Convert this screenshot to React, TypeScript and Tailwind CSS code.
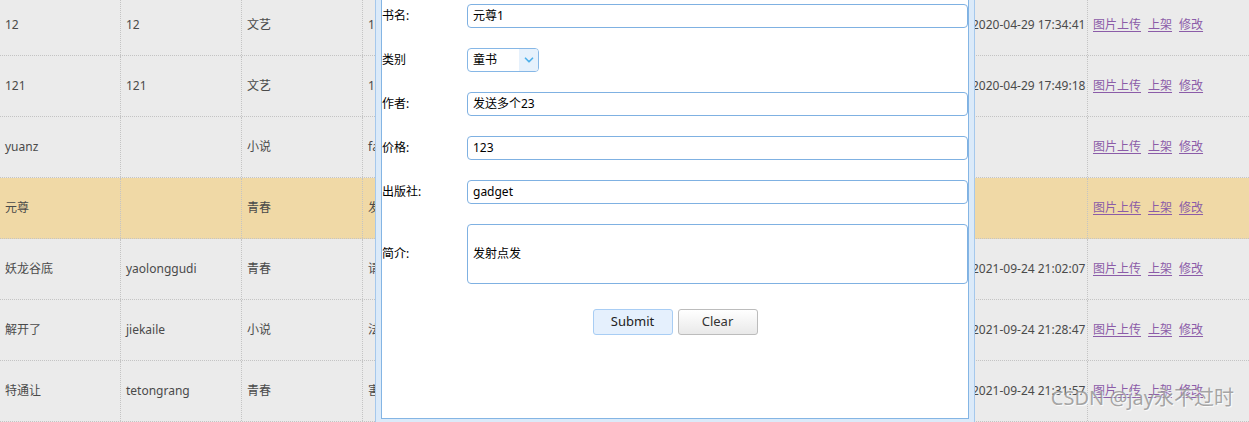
import { ChevronDown } from "lucide-react";

const rows = [
  { name: "12", py: "12", cat: "文艺", c4: "1", date: "2020-04-29 17:34:41" },
  { name: "121", py: "121", cat: "文艺", c4: "1", date: "2020-04-29 17:49:18" },
  { name: "yuanz", py: "", cat: "小说", c4: "fa", date: "" },
  { name: "元尊", py: "", cat: "青春", c4: "发", date: "", hl: true },
  { name: "妖龙谷底", py: "yaolonggudi", cat: "青春", c4: "请", date: "2021-09-24 21:02:07" },
  { name: "解开了", py: "jiekaile", cat: "小说", c4: "法", date: "2021-09-24 21:28:47" },
  { name: "特通让", py: "tetongrang", cat: "青春", c4: "害", date: "2021-09-24 21:31:57" },
];

const font = "font-['Noto_Sans','Noto_Sans_CJK_SC',sans-serif]";

function Cell({ children, w = "w-[121px]" }: { children?: React.ReactNode; w?: string }) {
  return (
    <div className={`${w} shrink-0 h-full flex items-center pl-[5px] border-r border-dotted border-[#c4c4c4] overflow-hidden whitespace-nowrap`}>
      {children}
    </div>
  );
}

function Field({ label, children, h = "h-[44px]" }: { label: string; children: React.ReactNode; h?: string }) {
  return (
    <div className={`flex items-center ${h}`}>
      <div className="w-[85px] shrink-0 text-[12px] text-black">{label}</div>
      {children}
    </div>
  );
}

function TextBox({ value }: { value: string }) {
  return (
    <div className="w-[501px] h-[24px] border border-[#7fb1e2] rounded-[4px] bg-white flex items-center pl-[5px] text-[12px] text-black">
      {value}
    </div>
  );
}

export default function App() {
  return (
    <div className={`relative w-[1249px] h-[422px] overflow-hidden bg-[#ebebeb] ${font}`}>
      {/* background table */}
      <div className="-mt-[5px] text-[12px] text-[#4a4a4a]">
        {rows.map((r, i) => (
          <div
            key={i}
            className={`flex h-[61px] border-b border-dotted border-[#c4c4c4] ${r.hl ? "bg-[#f0d9a6]" : ""}`}
          >
            <Cell>{r.name}</Cell>
            <Cell>{r.py}</Cell>
            <Cell>{r.cat}</Cell>
            <Cell>{r.c4}</Cell>
            <Cell />
            <Cell />
            <Cell />
            <Cell w="w-[120px]" />
            <Cell>{r.date}</Cell>
            <div className="flex-1 flex items-center pl-[5px] gap-[7px] text-[#8b5ca8] underline underline-offset-2">
              <span>图片上传</span>
              <span>上架</span>
              <span>修改</span>
            </div>
          </div>
        ))}
      </div>

      {/* dialog */}
      <div className="absolute left-[375px] top-[-20px] w-[600px] h-[446px] border border-[#a5c8ec] bg-[#dbeaf9] p-[5px]">
        <div className="h-[433px] border border-[#84b5e4] bg-white pt-[7px]">
          <Field label="书名:">
            <TextBox value="元尊1" />
          </Field>
          <Field label="类别">
            <div className="w-[72px] h-[24px] border border-[#86b7e6] rounded-[4px] flex overflow-hidden">
              <div className="flex-1 flex items-center pl-[5px] text-[12px] text-black">童书</div>
              <div className="w-[19px] bg-[#e6f1fc] flex items-center justify-center">
                <ChevronDown size={14} strokeWidth={3} className="text-[#4fb0ea]" />
              </div>
            </div>
          </Field>
          <Field label="作者:">
            <TextBox value="发送多个23" />
          </Field>
          <Field label="价格:">
            <TextBox value="123" />
          </Field>
          <Field label="出版社:">
            <TextBox value="gadget" />
          </Field>
          <div className="mt-[10px]">
            <Field label="简介:" h="h-[60px]">
              <div className="w-[501px] h-[60px] border border-[#7fb1e2] rounded-[4px] bg-white flex items-center pl-[5px] text-[12px] text-black">
                发射点发
              </div>
            </Field>
          </div>
          <div className="flex justify-center gap-[5px] mt-[25px] text-[13px] text-[#222]">
            <button className="w-[80px] h-[26px] rounded-[3px] border border-[#a8cdf4] bg-[#e5f0fd]">Submit</button>
            <button className="w-[80px] h-[26px] rounded-[3px] border border-[#bcbcbc] bg-gradient-to-b from-white to-[#e9e9e9] text-[#333]">
              Clear
            </button>
          </div>
        </div>
      </div>

      {/* watermark */}
      <div className="absolute right-[15px] bottom-[9px] text-[20px] text-[#8f8f8f]/80 [text-shadow:1px_1px_1px_rgba(255,255,255,0.9)]">
        CSDN @jay永不过时
      </div>
    </div>
  );
}
